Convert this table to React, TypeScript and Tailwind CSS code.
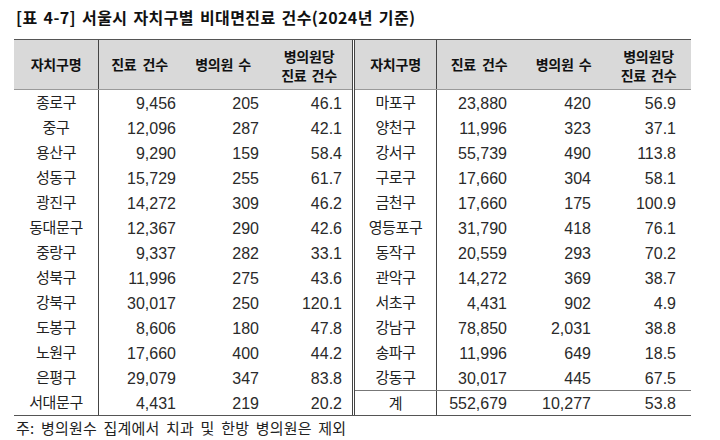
const leftRows = [
  ["종로구", "9,456", "205", "46.1"],
  ["중구", "12,096", "287", "42.1"],
  ["용산구", "9,290", "159", "58.4"],
  ["성동구", "15,729", "255", "61.7"],
  ["광진구", "14,272", "309", "46.2"],
  ["동대문구", "12,367", "290", "42.6"],
  ["중랑구", "9,337", "282", "33.1"],
  ["성북구", "11,996", "275", "43.6"],
  ["강북구", "30,017", "250", "120.1"],
  ["도봉구", "8,606", "180", "47.8"],
  ["노원구", "17,660", "400", "44.2"],
  ["은평구", "29,079", "347", "83.8"],
  ["서대문구", "4,431", "219", "20.2"],
];

const rightRows = [
  ["마포구", "23,880", "420", "56.9"],
  ["양천구", "11,996", "323", "37.1"],
  ["강서구", "55,739", "490", "113.8"],
  ["구로구", "17,660", "304", "58.1"],
  ["금천구", "17,660", "175", "100.9"],
  ["영등포구", "31,790", "418", "76.1"],
  ["동작구", "20,559", "293", "70.2"],
  ["관악구", "14,272", "369", "38.7"],
  ["서초구", "4,431", "902", "4.9"],
  ["강남구", "78,850", "2,031", "38.8"],
  ["송파구", "11,996", "649", "18.5"],
  ["강동구", "30,017", "445", "67.5"],
  ["계", "552,679", "10,277", "53.8"],
];

type Cols = { w: string[]; pr: string[] };

const leftCols: Cols = {
  w: ["w-[85px]", "w-[81px]", "w-[86px]", "w-[86px]"],
  pr: ["", "pr-[4px]", "pr-[7px]", "pr-[10px]"],
};
const rightCols: Cols = {
  w: ["w-[82px]", "w-[84px]", "w-[85px]", "w-[85px]"],
  pr: ["", "pr-[14px]", "pr-[15px]", "pr-[15px]"],
};

const Half = ({ rows, cols, total }: { rows: string[][]; cols: Cols; total?: boolean }) => (
  <div className="flex flex-col">
    <div className="flex h-[50px] bg-[#d9d9d9] border-b border-[#9a9a9a] font-bold text-[14px] tracking-[-0.2px] text-[#111] leading-[19px] font-['Noto_Sans_CJK_KR',sans-serif]">
      <div className={`${cols.w[0]} flex items-center justify-center border-r border-[#444]`}>자치구명</div>
      <div className={`${cols.w[1]} flex items-center justify-center [word-spacing:3px]`}>진료 건수</div>
      <div className={`${cols.w[2]} flex items-center justify-center [word-spacing:2px]`}>병의원 수</div>
      <div className={`${cols.w[3]} flex flex-col items-center justify-center pt-[3px] [word-spacing:2px]`}>
        <span>병의원당</span>
        <span>진료 건수</span>
      </div>
    </div>
    {rows.map((r, i) => {
      const isTotal = total && i === rows.length - 1;
      return (
        <div key={r[0]} className={`flex h-[25px] items-center ${isTotal ? "border-t border-[#777]" : ""}`}>
          <div className={`${cols.w[0]} h-full flex items-center justify-center border-r border-[#444] text-[15px] tracking-[-0.4px] text-[#222] pt-[2px]`}>
            {r[0]}
          </div>
          {r.slice(1).map((v, j) => (
            <div key={j} className={`${cols.w[j + 1]} ${cols.pr[j + 1]} text-right text-[16px] text-[#2a2a2a] pt-[2px]`}>
              {v}
            </div>
          ))}
        </div>
      );
    })}
  </div>
);

export default function App() {
  return (
    <div className="w-[720px] h-[440px] bg-white overflow-hidden font-['Liberation_Sans','Noto_Sans_CJK_KR',sans-serif]">
      <div className="pl-[14px] pt-[7px]">
        <div className="h-[20px] leading-[20px] text-[16px] font-bold text-[#111] pl-[2px] tracking-[0.4px] [word-spacing:2px] font-['Noto_Sans_CJK_KR',sans-serif]">
          [표 4-7] 서울시 자치구별 비대면진료 건수(2024년 기준)
        </div>
        <div className="mt-[12px] flex w-[677px] border-t border-b border-[#555]">
          <div className="w-[339px] border-r border-[#444]">
            <Half rows={leftRows} cols={leftCols} />
          </div>
          <div className="ml-[1px] w-[337px] border-l border-[#444]">
            <Half rows={rightRows} cols={rightCols} total />
          </div>
        </div>
        <div className="mt-[2px] pl-[2px] h-[20px] leading-[20px] text-[15px] text-[#222] tracking-[0.2px] [word-spacing:3px] font-['Noto_Sans_CJK_KR',sans-serif]">
          주: 병의원수 집계에서 치과 및 한방 병의원은 제외
        </div>
      </div>
    </div>
  );
}
